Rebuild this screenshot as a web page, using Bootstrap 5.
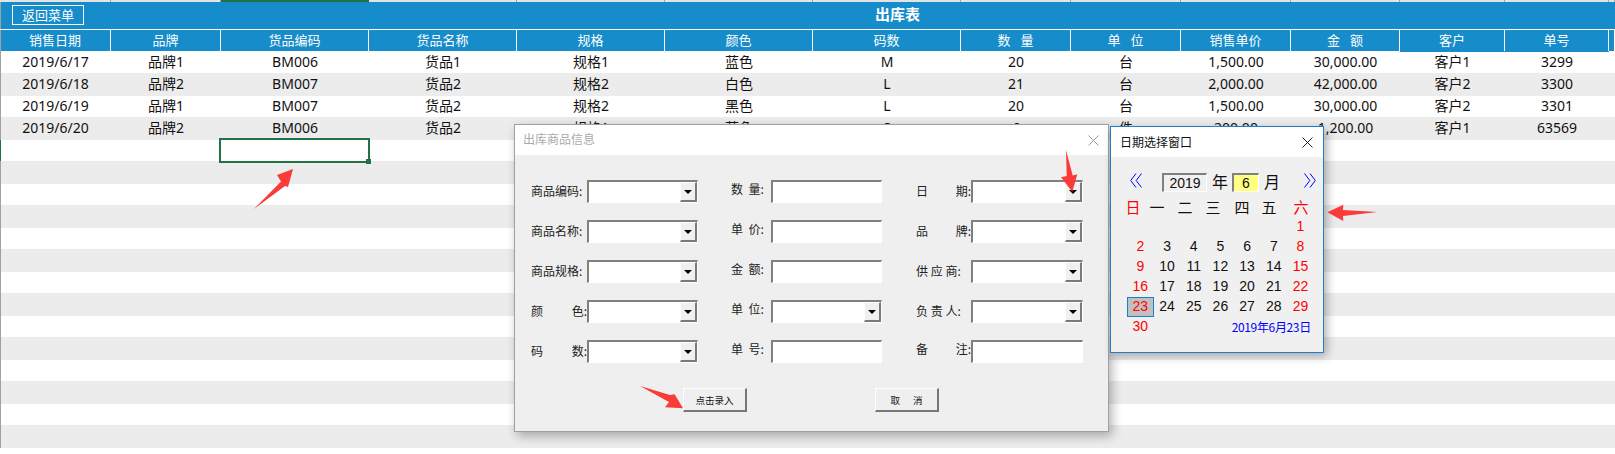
<!DOCTYPE html>
<html lang="zh-CN">
<head>
<meta charset="utf-8">
<title>出库表</title>
<link href="https://cdn.jsdelivr.net/npm/bootstrap@5.3.0/dist/css/bootstrap.min.css" rel="stylesheet">
<style>
html,body{margin:0;background:#fff;overflow:hidden}
body{font-family:"Noto Sans","Noto Sans CJK SC",sans-serif;color:#111}
.sheet{position:relative;width:1615px;height:454px;overflow:hidden}
.strip{display:grid;grid-template-columns:111px 110px 148px 148px 148px 148px 148px 110px 110px 110px 109px 105px 104px 6px;height:2px;background:#e4e4e4}
.strip i{border-right:1px solid #a8a8a8}
.strip i.on{background:#217346;border:0}
.band{height:27px;background:#168ccb;color:#fff;border-left:1px solid #a0a0a0}
.back-btn{margin:3px 0 0 11px;width:72px;height:20px;border:1px solid #fff;border-radius:0;background:transparent;color:#fff;font-size:13px;line-height:18px;padding:0}
.band-title{margin-left:791px;font-size:15px;font-weight:700;line-height:24px}
.stock-table{table-layout:fixed;width:1615px;margin:0;border-collapse:separate;border-spacing:0;font-size:14px}
.stock-table>:not(caption)>*>*{padding:0 0 1px;line-height:20px;text-align:center;border:0;box-shadow:none;vertical-align:middle;color:#111;background:#fff;overflow:hidden;white-space:nowrap}
.stock-table>:not(caption)>*>*:first-child{box-shadow:inset 1px 0 0 #a0a0a0}
.stock-table thead th{background:#168ccb;color:#fff;font-weight:400;font-size:13px;height:22px;border-top:1px solid #fff;border-right:1px solid #fff;white-space:pre}
.stock-table tbody tr{height:21px}
.stock-table tbody tr:nth-child(even){height:23px}
.stock-table tbody tr:first-child{height:22px}
.stock-table tbody tr:first-child td{padding-bottom:0}
.stock-table tbody tr:first-child td:nth-child(12),.stock-table tbody tr:first-child td:nth-child(13){box-shadow:inset 0 1px 0 #168ccb}
.stock-table tbody tr:nth-child(even) td{background:#ececec}
.sel-cell{position:absolute;left:219px;top:138px;width:151px;height:25px;border:2px solid #217346}
.sel-cell::after{content:"";position:absolute;right:-3px;bottom:-3px;width:5px;height:5px;background:#217346}
.row-tick{position:absolute;left:0;top:140px;width:1px;height:21px;background:#217346}
.win{position:absolute;display:flex;flex-direction:column}
.win-bar{background:#fff;flex:none}
.win-x{width:11px;height:11px}
.stock-win{left:514px;top:124px;width:595px;height:308px;border:1px solid #a0a0a0;background:#efefef;box-shadow:3px 4px 10px rgba(0,0,0,.3)}
.stock-bar{height:30px;padding:0 9px 0 8px;color:#aaa;font-size:12px}
.stock-form{display:grid;grid-template-columns:56px 111px 73px 111px 89px 112px;row-gap:17px;grid-auto-rows:23px;padding:25px 0 0 16px;font-size:12px;font-family:"Noto Sans CJK SC","Noto Sans",sans-serif;color:#222}
.lbl{display:flex;align-items:center;white-space:pre;padding-bottom:2px}
.lbl.split{justify-content:space-between}
.lbl.w2{width:40px;margin-left:auto;padding-bottom:6px}
.lbl.w3{width:55px;margin-left:auto}
.lbl.up{padding-bottom:6px}
.combo,.stock-form .form-control{height:23px;width:100%;min-height:0;padding:0;border-radius:0;background:#fff;border-style:solid;border-width:2px 1px 1px 2px;border-color:#808080 #fff #fff #808080;box-shadow:none}
.combo-btn{width:17px;height:100%;margin-left:auto;background:#f0f0f0;border-style:solid;border-width:1px 2px 2px 1px;border-color:#fff #7a7a7a #7a7a7a #fff}
.combo-btn::after{content:"";border-style:solid;border-width:4px 4px 0;border-color:#000 transparent transparent}
.stock-actions{padding:25px 0 0 168px;gap:128px}
.raise-btn{width:64px;height:24px;padding:0;border-radius:0;background:#efefef;font-size:9.5px;line-height:20px;color:#111;border-style:solid;border-width:1px 2px 2px 1px;border-color:#fff #777 #777 #fff;white-space:pre;font-family:"Noto Sans CJK SC",sans-serif}
.cal-win{left:1110px;top:126px;width:214px;height:227px;border:1px solid #1a7fd0;background:#f0f0f0;box-shadow:3px 3px 9px rgba(0,0,0,.3);font-family:"Noto Sans CJK SC",sans-serif}
.cal-bar{height:30px;padding:0 10px 0 9px;font-size:12px;color:#111}
.cal-nav{height:20px;margin-top:16px;padding-left:19px;color:#111;font-size:16px;line-height:16px}
.nav-ico{width:12px;height:15px;flex:none}
.cal-box{height:19px;display:flex;align-items:center;justify-content:center;font:14px/1 "Liberation Sans",sans-serif;border-style:solid;border-width:2px 1px 1px 2px;border-color:#808080 #fff #fff #808080;color:#111}
.cal-year{width:45px;margin-left:20px;margin-right:5px;background:#f0f0f0}
.cal-month{width:27px;margin:0 5px 0 4px;background:#ffff80}
.cal-next{margin-left:24px}
.cal-week{display:grid;grid-template-columns:24px 24px 32px 24px 34px 20px 44px;padding-left:10px;margin-top:4px;height:20px;line-height:20px;font-size:15px;text-align:center}
.cal-days{display:grid;grid-template-columns:repeat(7,26.7px);grid-auto-rows:20px;padding-left:16px;font:14px/18px "Liberation Sans",sans-serif;text-align:center;color:#111}
.red{color:#f00}
.cal-today{background:#c0c0c0;border:1px solid #1a7fd0;line-height:17px}
.cal-date{grid-column:4 / span 4;font:12px/20px "Noto Sans CJK SC","Liberation Sans",sans-serif;color:#00f;text-align:right;white-space:nowrap;padding-right:3px;letter-spacing:-.35px}
.marks{position:absolute;left:0;top:0;pointer-events:none}
</style>
</head>
<body>
<div class="sheet">
  <div class="strip"><i></i><i></i><i class="on"></i><i></i><i></i><i></i><i></i><i></i><i></i><i></i><i></i><i></i><i></i><i></i></div>
  <div class="band d-flex align-items-start">
    <button type="button" class="btn back-btn">返回菜单</button>
    <div class="band-title">出库表</div>
  </div>
  <table class="table table-borderless stock-table">
    <colgroup>
      <col width="111"><col width="110"><col span="5" width="148"><col span="3" width="110"><col width="109"><col width="105"><col width="104"><col width="6">
    </colgroup>
    <thead>
      <tr><th>销售日期</th><th>品牌</th><th>货品编码</th><th>货品名称</th><th>规格</th><th>颜色</th><th>码数</th><th>数   量</th><th>单   位</th><th>销售单价</th><th>金   额</th><th>客户</th><th>单号</th><th></th></tr>
    </thead>
    <tbody>
      <tr><td>2019/6/17</td><td>品牌1</td><td>BM006</td><td>货品1</td><td>规格1</td><td>蓝色</td><td>M</td><td>20</td><td>台</td><td>1,500.00</td><td>30,000.00</td><td>客户1</td><td>3299</td><td></td></tr>
      <tr><td>2019/6/18</td><td>品牌2</td><td>BM007</td><td>货品2</td><td>规格2</td><td>白色</td><td>L</td><td>21</td><td>台</td><td>2,000.00</td><td>42,000.00</td><td>客户2</td><td>3300</td><td></td></tr>
      <tr><td>2019/6/19</td><td>品牌1</td><td>BM007</td><td>货品2</td><td>规格2</td><td>黑色</td><td>L</td><td>20</td><td>台</td><td>1,500.00</td><td>30,000.00</td><td>客户2</td><td>3301</td><td></td></tr>
      <tr><td>2019/6/20</td><td>品牌2</td><td>BM006</td><td>货品2</td><td>规格1</td><td>蓝色</td><td>S</td><td>6</td><td>件</td><td>200.00</td><td>1,200.00</td><td>客户1</td><td>63569</td><td></td></tr>
      <tr><td colspan="14"></td></tr><tr><td colspan="14"></td></tr><tr><td colspan="14"></td></tr><tr><td colspan="14"></td></tr><tr><td colspan="14"></td></tr><tr><td colspan="14"></td></tr><tr><td colspan="14"></td></tr><tr><td colspan="14"></td></tr><tr><td colspan="14"></td></tr><tr><td colspan="14"></td></tr><tr><td colspan="14"></td></tr><tr><td colspan="14"></td></tr><tr><td colspan="14"></td></tr><tr><td colspan="14"></td></tr>
    </tbody>
  </table>
  <div class="row-tick"></div>
  <div class="sel-cell"></div>

  <div class="win stock-win">
    <div class="win-bar stock-bar d-flex align-items-center justify-content-between">
      <span>出库商品信息</span>
      <svg class="win-x" viewBox="0 0 11 11"><path d="M.5.5l10 10M10.5.5l-10 10" stroke="#999" fill="none"/></svg>
    </div>
    <div class="stock-form">
      <div class="lbl">商品编码:</div><div class="combo d-flex"><div class="combo-btn d-flex align-items-center justify-content-center"></div></div>
      <div class="lbl w2">数  量:</div><input class="form-control" type="text">
      <div class="lbl w3 split"><span>日</span><span>期:</span></div><div class="combo d-flex"><div class="combo-btn d-flex align-items-center justify-content-center"></div></div>

      <div class="lbl">商品名称:</div><div class="combo d-flex"><div class="combo-btn d-flex align-items-center justify-content-center"></div></div>
      <div class="lbl w2">单  价:</div><input class="form-control" type="text">
      <div class="lbl w3 split"><span>品</span><span>牌:</span></div><div class="combo d-flex"><div class="combo-btn d-flex align-items-center justify-content-center"></div></div>

      <div class="lbl">商品规格:</div><div class="combo d-flex"><div class="combo-btn d-flex align-items-center justify-content-center"></div></div>
      <div class="lbl w2">金  额:</div><input class="form-control" type="text">
      <div class="lbl w3">供 应 商:</div><div class="combo d-flex"><div class="combo-btn d-flex align-items-center justify-content-center"></div></div>

      <div class="lbl split"><span>颜</span><span>色:</span></div><div class="combo d-flex"><div class="combo-btn d-flex align-items-center justify-content-center"></div></div>
      <div class="lbl w2">单  位:</div><div class="combo d-flex"><div class="combo-btn d-flex align-items-center justify-content-center"></div></div>
      <div class="lbl w3">负 责 人:</div><div class="combo d-flex"><div class="combo-btn d-flex align-items-center justify-content-center"></div></div>

      <div class="lbl split"><span>码</span><span>数:</span></div><div class="combo d-flex"><div class="combo-btn d-flex align-items-center justify-content-center"></div></div>
      <div class="lbl w2">单  号:</div><input class="form-control" type="text">
      <div class="lbl w3 split up"><span>备</span><span>注:</span></div><input class="form-control" type="text">
    </div>
    <div class="stock-actions d-flex">
      <button type="button" class="btn raise-btn">点击录入</button>
      <button type="button" class="btn raise-btn">取      消</button>
    </div>
  </div>

  <div class="win cal-win">
    <div class="win-bar cal-bar d-flex align-items-center justify-content-between">
      <span>日期选择窗口</span>
      <svg class="win-x" viewBox="0 0 11 11"><path d="M.5.5l10 10M10.5.5l-10 10" stroke="#222" fill="none"/></svg>
    </div>
    <div class="cal-nav d-flex align-items-start">
      <svg class="nav-ico" viewBox="0 0 12 15"><path d="M6 .5L.7 7.5 6 14.5M11.5.5L6.2 7.5l5.3 7" stroke="#00f" fill="none"/></svg>
      <div class="cal-box cal-year">2019</div><span>年</span>
      <div class="cal-box cal-month">6</div><span>月</span>
      <svg class="nav-ico cal-next" viewBox="0 0 12 15"><path d="M.5.5L5.8 7.5.5 14.5M6 .5l5.3 7L6 14.5" stroke="#00f" fill="none"/></svg>
    </div>
    <div class="cal-week"><span class="red">日</span><span>一</span><span>二</span><span>三</span><span>四</span><span>五</span><span class="red">六</span></div>
    <div class="cal-days">
      <span></span><span></span><span></span><span></span><span></span><span></span><span class="red">1</span>
      <span class="red">2</span><span>3</span><span>4</span><span>5</span><span>6</span><span>7</span><span class="red">8</span>
      <span class="red">9</span><span>10</span><span>11</span><span>12</span><span>13</span><span>14</span><span class="red">15</span>
      <span class="red">16</span><span>17</span><span>18</span><span>19</span><span>20</span><span>21</span><span class="red">22</span>
      <span class="red cal-today">23</span><span>24</span><span>25</span><span>26</span><span>27</span><span>28</span><span class="red">29</span>
      <span class="red">30</span><span></span><span></span><span class="cal-date">2019年6月23日</span>
    </div>
  </div>

  <svg class="marks" width="1615" height="454" viewBox="0 0 1615 454">
    <g fill="#fb3a3a">
      <path d="M254 209L281 181.5 277 175 293 169 288 187 285 186Z"/>
      <path d="M1066 150L1072.7 175.5 1077.3 174.3 1072.3 191.7 1061 177.3 1066.7 176Z"/>
      <path d="M1327.3 212.3L1343.3 204.7 1343 210 1377.3 212 1343 216 1343.3 221Z"/>
      <path d="M640 386L670 395 674.6 394.3 683 408.3 665 407.3 669 402Z"/>
    </g>
  </svg>
</div>
<script src="https://cdn.jsdelivr.net/npm/bootstrap@5.3.0/dist/js/bootstrap.bundle.min.js"></script>
</body>
</html>
